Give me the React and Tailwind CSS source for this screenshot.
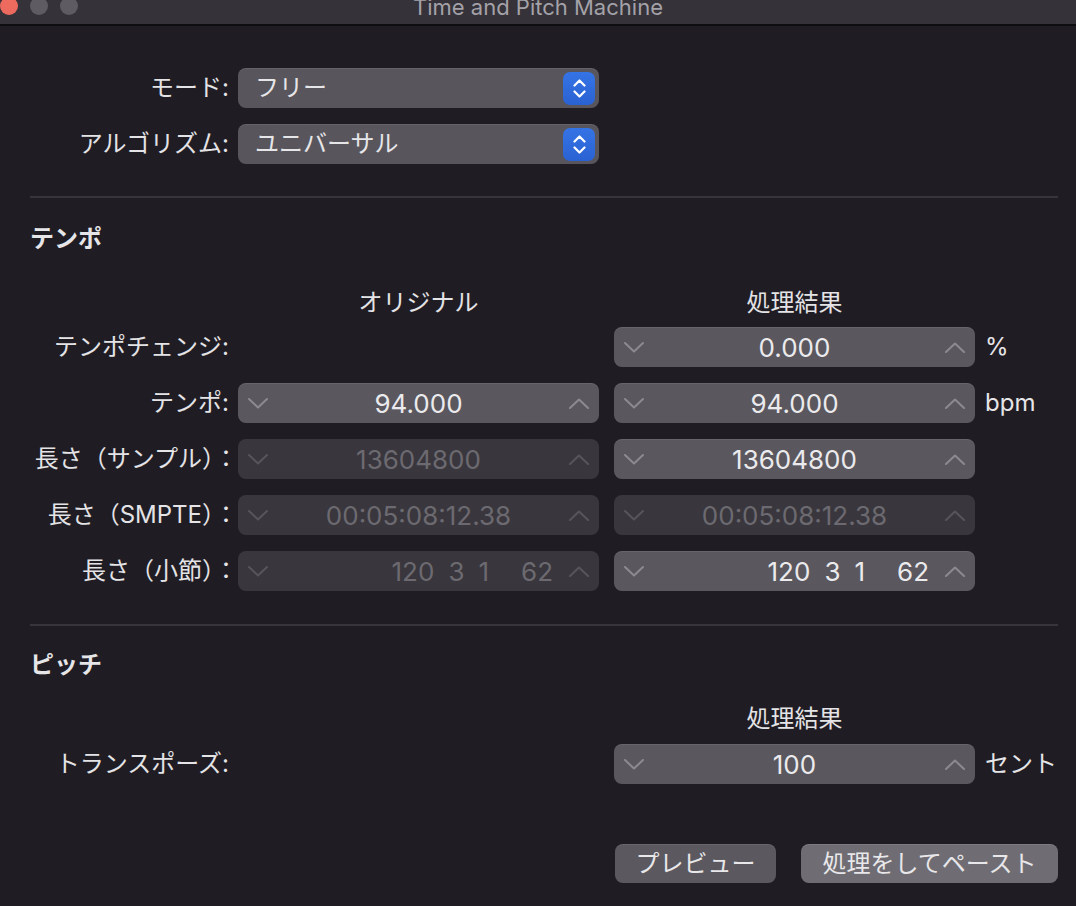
import React from 'react';

const FONT = { fontFamily: 'Inter, "Noto Sans CJK JP", sans-serif' };

function Chevron({ up, className }) {
  return (
    <svg width="20" height="11" viewBox="0 0 20 11" className={className} fill="none">
      <polyline
        points={up ? '1,10 10,1.5 19,10' : '1,1 10,9.5 19,1'}
        stroke="currentColor"
        strokeWidth="2"
        strokeLinecap="round"
        strokeLinejoin="round"
      />
    </svg>
  );
}

function Popup({ value }) {
  return (
    <div className="w-[361px] h-[40px] rounded-[8px] bg-[#58565c] shadow-[inset_0_1px_0_rgba(255,255,255,0.08)] flex items-center pl-[17px] pr-[4px]">
      <span className="flex-1 text-[24px] text-[#e6e5e8]">{value}</span>
      <div className="w-[32px] h-[33px] rounded-[7px] bg-gradient-to-b from-[#3574e6] to-[#2a62d2] flex flex-col items-center justify-center gap-[3px]">
        <svg width="13" height="8" viewBox="0 0 13 8" fill="none">
          <polyline points="1.5,6.5 6.5,1.5 11.5,6.5" stroke="white" strokeWidth="2.2" strokeLinecap="round" strokeLinejoin="round" />
        </svg>
        <svg width="13" height="8" viewBox="0 0 13 8" fill="none">
          <polyline points="1.5,1.5 6.5,6.5 11.5,1.5" stroke="white" strokeWidth="2.2" strokeLinecap="round" strokeLinejoin="round" />
        </svg>
      </div>
    </div>
  );
}

function Stepper({ value, disabled, bars }) {
  const box = disabled
    ? 'bg-[#39373d] text-[#6c6a70]'
    : 'bg-[#5a585e] text-[#ebeaed] shadow-[inset_0_1px_0_rgba(255,255,255,0.08)]';
  const chev = disabled ? 'text-[#57555b]' : 'text-[#8c8a90]';
  return (
    <div className={`w-[361px] h-[40px] rounded-[8px] flex items-center px-[10px] ${box}`}>
      <Chevron className={chev} />
      {bars ? (
        <div className="flex-1 flex justify-end items-center pr-[16px] text-[26px]">
          <span>120</span>
          <span className="ml-[14px]">3</span>
          <span className="ml-[14px]">1</span>
          <span className="ml-[32px]">62</span>
        </div>
      ) : (
        <div className="flex-1 text-center text-[26px]">{value}</div>
      )}
      <Chevron up className={chev} />
    </div>
  );
}

function Row({ label, wide, children }) {
  return (
    <div className="flex items-center h-[40px]">
      <div className={`w-[208px] text-right text-[24px] text-[#e4e3e6] whitespace-nowrap ${wide ? 'pr-0' : 'pr-[9px]'}`}>
        {label}
      </div>
      {children}
    </div>
  );
}

function Unit({ children }) {
  return <div className="ml-[10px] text-[24px] text-[#e6e5e8]">{children}</div>;
}

export default function App() {
  return (
    <div className="w-[1076px] h-[906px] bg-[#1f1d23] overflow-hidden" style={FONT}>
      {/* title bar */}
      <div className="h-[26px] bg-[#353239] border-b-2 border-[#0e0d10] grid grid-cols-[1fr_auto_1fr] overflow-hidden">
        <div className="flex gap-[12px] -mt-[3px]">
          <div className="w-[18px] h-[18px] rounded-full bg-[#ec6a5e]" />
          <div className="w-[18px] h-[18px] rounded-full bg-[#5e5c62]" />
          <div className="w-[18px] h-[18px] rounded-full bg-[#5e5c62]" />
        </div>
        <div className="text-[22px] leading-[22px] -mt-[4px] text-[#a4a2a8]">Time and Pitch Machine</div>
        <div />
      </div>

      <div className="pl-[30px] pr-[18px]">
        <div className="mt-[42px] flex flex-col gap-[16px]">
          <Row label="モード:">
            <Popup value="フリー" />
          </Row>
          <Row label="アルゴリズム:">
            <Popup value="ユニバーサル" />
          </Row>
        </div>

        <div className="mt-[32px] h-[2px] bg-[#37353b]" />

        <div className="mt-[25px] h-[32px] flex items-center text-[24px] font-bold text-[#e6e5e8]">テンポ</div>

        <div className="mt-[32px] h-[32px] flex items-center text-[24px] text-[#e4e3e6]">
          <div className="w-[208px]" />
          <div className="w-[361px] text-center">オリジナル</div>
          <div className="ml-[15px] w-[361px] text-center">処理結果</div>
        </div>

        <div className="mt-[8px] flex flex-col gap-[16px]">
          <Row label="テンポチェンジ:">
            <div className="w-[361px]" />
            <div className="ml-[15px]">
              <Stepper value="0.000" />
            </div>
            <Unit>%</Unit>
          </Row>
          <Row label="テンポ:">
            <Stepper value="94.000" />
            <div className="ml-[15px]">
              <Stepper value="94.000" />
            </div>
            <Unit>bpm</Unit>
          </Row>
          <Row label="長さ（サンプル）：" wide>
            <Stepper value="13604800" disabled />
            <div className="ml-[15px]">
              <Stepper value="13604800" />
            </div>
          </Row>
          <Row label="長さ（SMPTE）：" wide>
            <Stepper value="00:05:08:12.38" disabled />
            <div className="ml-[15px]">
              <Stepper value="00:05:08:12.38" disabled />
            </div>
          </Row>
          <Row label="長さ（小節）：" wide>
            <Stepper bars disabled />
            <div className="ml-[15px]">
              <Stepper bars />
            </div>
          </Row>
        </div>

        <div className="mt-[33px] h-[2px] bg-[#37353b]" />

        <div className="mt-[23px] h-[32px] flex items-center text-[24px] font-bold text-[#e6e5e8]">ピッチ</div>

        <div className="mt-[22px] h-[32px] flex items-center text-[24px] text-[#e4e3e6]">
          <div className="w-[584px]" />
          <div className="w-[361px] text-center">処理結果</div>
        </div>

        <div className="mt-[9px]">
          <Row label="トランスポーズ:">
            <div className="w-[361px]" />
            <div className="ml-[15px]">
              <Stepper value="100" />
            </div>
            <Unit>セント</Unit>
          </Row>
        </div>

        <div className="mt-[60px] flex justify-end gap-[25px] text-[24px] text-[#e8e7ea]">
          <button className="w-[161px] h-[39px] rounded-[8px] bg-[#5b595f] shadow-[inset_0_1px_0_rgba(255,255,255,0.08)]">プレビュー</button>
          <button className="w-[257px] h-[39px] rounded-[8px] bg-[#6f6d73] shadow-[inset_0_1px_0_rgba(255,255,255,0.1)]">処理をしてペースト</button>
        </div>
      </div>
    </div>
  );
}
